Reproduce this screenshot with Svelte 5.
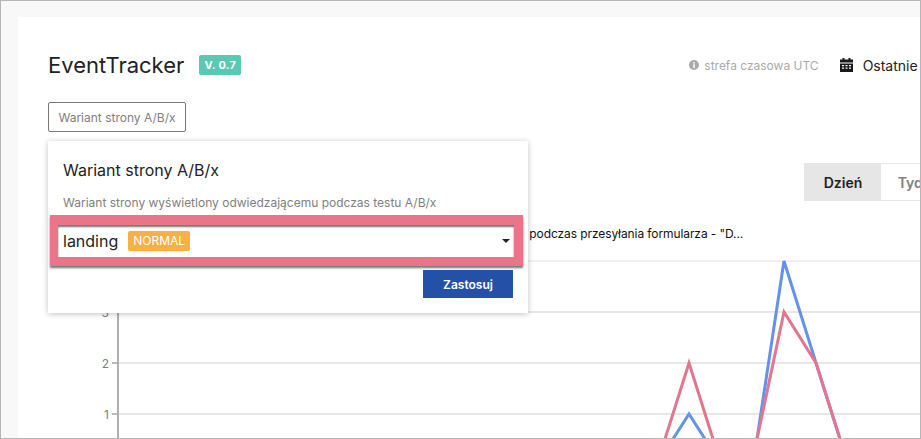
<script lang="ts">
	const gridLines = [
		{ y: 261, label: '' },
		{ y: 312, label: '3' },
		{ y: 363, label: '2' },
		{ y: 414, label: '1' }
	];
	const blueLines = ['757,439 784,261 816,363 840,439', '673,439 689,414 705,439'];
	const pinkLines = ['757,439 784,312 816,363 840,439', '665,439 689,363 713,439'];
</script>

<div class="frame">
	<main class="card">
		<header class="top-row">
			<h1>EventTracker</h1>
			<span class="version">V. 0.7</span>
			<div class="timezone">
				<svg width="10" height="10" viewBox="0 0 10 10" aria-hidden="true">
					<circle cx="5" cy="5" r="5" fill="#aaa" />
					<rect x="4.2" y="4.2" width="1.6" height="3.6" fill="#fff" />
					<rect x="4.2" y="2.1" width="1.6" height="1.4" fill="#fff" />
				</svg>
				strefa czasowa UTC
			</div>
			<div class="range">
				<svg width="13" height="14" viewBox="0 0 13 14" aria-hidden="true">
					<rect x="2.5" y="0" width="2" height="3" fill="#1a1a1a" />
					<rect x="8.5" y="0" width="2" height="3" fill="#1a1a1a" />
					<rect x="0" y="1.5" width="13" height="3" fill="#1a1a1a" />
					<path fill="#1a1a1a" fill-rule="evenodd" d="M0 5.5h13V14H0zM2 7v1.2h2V7zm3.5 0v1.2h2V7zM9 7v1.2h2V7zM2 9.6v1.2h2V9.6zm3.5 0v1.2h2V9.6zm3.5 0v1.2h2V9.6z" />
				</svg>
				Ostatnie 7 dni
			</div>
		</header>

		<button class="filter" type="button">Wariant strony A/B/x</button>

		<div class="period-row">
			<div class="periods">
				<span class="period active">Dzień</span>
				<span class="period">Tydzień</span>
			</div>
		</div>

		<div class="chart-title">Liczba konwersji podczas przesyłania formularza - "D...</div>
	</main>

	<svg class="chart" width="921" height="439" viewBox="0 0 921 439" aria-hidden="true">
		{#each gridLines as line}
			<line x1="118" x2="921" y1={line.y} y2={line.y} stroke={line.y === 261 ? '#e4e4e4' : '#cfcfcf'} />
			<line x1="112" x2="118" y1={line.y} y2={line.y} stroke="#777" />
			<text x="109" y={line.y + 5} text-anchor="end">{line.label}</text>
		{/each}
		<line x1="118" x2="118" y1="261" y2="439" stroke="#b0b0b0" stroke-width="2" />
		{#each blueLines as points}
			<polyline {points} fill="none" stroke="#6292ea" stroke-width="3" />
		{/each}
		{#each pinkLines as points}
			<polyline {points} fill="none" stroke="#e4758f" stroke-width="3" />
		{/each}
	</svg>

	<section class="popup">
		<h2>Wariant strony A/B/x</h2>
		<p>Wariant strony wyświetlony odwiedzającemu podczas testu A/B/x</p>
		<div class="highlight">
			<div class="select">
				<span class="value">landing</span>
				<span class="tag">NORMAL</span>
				<span class="caret"></span>
			</div>
		</div>
		<div class="actions">
			<button class="apply" type="button">Zastosuj</button>
		</div>
	</section>
</div>

<style>
	:global(body) {
		margin: 0;
		font-family: Inter, 'Liberation Sans', sans-serif;
	}

	.frame {
		position: relative;
		width: 921px;
		height: 439px;
		box-sizing: border-box;
		padding: 16px 0 0 17px;
		background: #f8f8f8;
		border: 1px solid #b6b6b6;
		overflow: hidden;
	}

	.card {
		width: 1040px;
		height: 430px;
		box-sizing: border-box;
		padding: 36px 0 0 30px;
		background: #fff;
	}

	.top-row {
		display: flex;
		align-items: center;
		height: 24px;
	}

	h1 {
		margin: 0;
		font-size: 22px;
		font-weight: 400;
		color: #222;
	}

	.version {
		margin-left: 15px;
		width: 42px;
		height: 20px;
		line-height: 20px;
		text-align: center;
		background: #5bc8b4;
		border-radius: 2px;
		color: #fff;
		font-size: 11px;
		font-weight: 700;
		letter-spacing: 0.3px;
	}

	.timezone {
		display: flex;
		align-items: center;
		gap: 5px;
		margin-left: 448px;
		color: #aaa;
		font-size: 12px;
	}

	.range {
		display: flex;
		align-items: center;
		gap: 10px;
		margin-left: 21px;
		color: #222;
		font-size: 14px;
		white-space: nowrap;
	}

	.filter {
		display: block;
		margin-top: 25px;
		width: 138px;
		height: 30px;
		padding: 0;
		background: #fff;
		border: 1px solid #777;
		border-radius: 2px;
		color: #808080;
		font-family: inherit;
		font-size: 12px;
	}

	.period-row {
		margin-top: 31px;
		padding-left: 756px;
	}

	.periods {
		display: flex;
		width: 164px;
		height: 38px;
		box-sizing: border-box;
		border: 1px solid #e6e6e6;
	}

	.period {
		display: flex;
		align-items: center;
		justify-content: center;
		width: 87px;
		flex: none;
		color: #808080;
		font-size: 14px;
		font-weight: 600;
	}

	.period.active {
		width: 76px;
		background: #e6e6e6;
		color: #222;
	}

	.chart-title {
		margin-top: 25px;
		padding-left: 385px;
		color: #111;
		font-size: 12px;
		letter-spacing: -0.09px;
		white-space: nowrap;
	}

	.chart {
		position: absolute;
		left: -1px;
		top: -1px;
		pointer-events: none;
	}

	.chart text {
		fill: #808080;
		font-size: 12px;
	}

	.popup {
		position: absolute;
		left: 47px;
		top: 140px;
		width: 480px;
		height: 172px;
		box-sizing: border-box;
		padding-top: 19px;
		background: #fff;
		box-shadow: 0 1px 6px rgba(0, 0, 0, 0.25);
	}

	h2 {
		margin: 0 0 0 15px;
		font-size: 16px;
		line-height: 20px;
		font-weight: 400;
		color: #222;
	}

	p {
		margin: 15px 0 0 15px;
		font-size: 12px;
		line-height: 16px;
		color: #808080;
	}

	.highlight {
		width: 473px;
		box-sizing: border-box;
		margin: 4px 0 0 2px;
		border: solid #e8758a;
		border-width: 10px 9px 9px 8px;
		box-shadow: 0 2px 2px rgba(0, 0, 0, 0.55);
	}

	.select {
		display: flex;
		align-items: center;
		height: 32px;
		padding: 0 4px 0 5px;
		background: #fff;
		box-shadow: inset 0 2px 2px rgba(0, 0, 0, 0.55);
	}

	.value {
		font-size: 16px;
		color: #222;
	}

	.tag {
		margin-left: 10px;
		padding: 0 5px;
		height: 20px;
		line-height: 20px;
		background: #f6b044;
		border-radius: 2px;
		color: #fff;
		font-size: 12px;
	}

	.caret {
		margin-left: auto;
		border: 4px solid transparent;
		border-top: 4px solid #222;
		border-bottom: 0;
	}

	.actions {
		display: flex;
		justify-content: flex-end;
		margin-top: 4px;
		padding-right: 15px;
	}

	.apply {
		width: 90px;
		height: 28px;
		padding: 0;
		background: #2450a8;
		border: 0;
		color: #fff;
		font-family: inherit;
		font-size: 12px;
		font-weight: 600;
	}
</style>
